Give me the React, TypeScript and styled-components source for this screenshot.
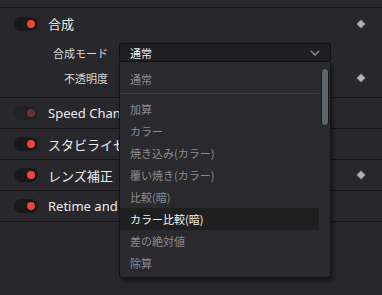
import React from "react";
import styled, { createGlobalStyle } from "styled-components";

const Global = createGlobalStyle`
  html, body { margin: 0; padding: 0; background: #28272c; }
  body { font-family: "Noto Sans", "Noto Sans CJK JP", sans-serif; }
`;

const Page = styled.div`
  width: 382px;
  height: 295px;
  background: #28272c;
  overflow: hidden;
  position: relative;
`;

const TopGap = styled.div`
  height: 7px;
  border-bottom: 1px solid #151517;
`;

const Section = styled.div`
  display: flex;
  flex-direction: column;
  padding-bottom: 7px;
  border-bottom: 1px solid #151517;
`;

const Row = styled.div<{ $h: number }>`
  display: flex;
  align-items: center;
  padding: 0 16px 0 14px;
  gap: 10px;
  box-sizing: border-box;
  border-bottom: ${(p) => (p.$h === 30 ? "1px solid #151517" : "none")};
  height: ${(p) => (p.$h === 30 ? 31 : p.$h)}px;
`;

const Toggle = styled.div<{ $off?: boolean }>`
  width: 24px;
  height: 14px;
  border-radius: 7px;
  background: ${(p) => (p.$off ? "#222125" : "#19191b")};
  display: flex;
  align-items: center;
  justify-content: flex-end;
  padding-right: 3px;
  box-sizing: border-box;
  flex: none;
`;

const Dot = styled.div<{ $off?: boolean }>`
  width: 8px;
  height: 8px;
  border-radius: 50%;
  background: ${(p) => (p.$off ? "#6a3232" : "#e8473a")};
`;

const Title = styled.span`
  font-family: "Noto Sans", "Noto Sans CJK JP", sans-serif;
  font-size: 13px;
  color: #ececec;
  white-space: nowrap;
  flex: 1;
  overflow: hidden;
`;

const ParamRow = styled.div<{ $h: number }>`
  height: ${(p) => p.$h}px;
  display: flex;
  align-items: center;
  padding-right: 16px;
`;

const ParamLabel = styled.span`
  width: 108px;
  text-align: right;
  font-family: "Noto Sans CJK JP", sans-serif;
  font-size: 11px;
  color: #d8d8d8;
  margin-right: 11px;
  flex: none;
  white-space: nowrap;
`;

const Spacer = styled.div`
  flex: 1;
`;

const SelectWrap = styled.div`
  position: relative;
  width: 212px;
  flex: none;
`;

const SelectBox = styled.div`
  height: 19px;
  box-sizing: border-box;
  border: 1px solid #111112;
  border-radius: 3px;
  background: #1f1f21;
  display: flex;
  align-items: center;
  justify-content: space-between;
  padding: 0 10px 0 10px;
  font-family: "Noto Sans CJK JP", sans-serif;
  font-size: 11px;
  color: #f2f2f2;
`;

const Menu = styled.div`
  position: absolute;
  left: 0;
  top: 19px;
  width: 212px;
  height: 216px;
  box-sizing: border-box;
  background: #2a292e;
  border: 1px solid #141416;
  border-top: none;
  border-radius: 0 0 3px 3px;
  box-shadow: 2px 3px 4px rgba(0, 0, 0, 0.45);
  padding: 6px 11px 0 0;
  z-index: 5;
  display: flex;
  flex-direction: column;
`;

const Item = styled.div<{ $active?: boolean }>`
  height: 22px;
  display: flex;
  align-items: center;
  padding-left: 10px;
  font-family: "Noto Sans CJK JP", sans-serif;
  font-size: 11px;
  color: ${(p) => (p.$active ? "#f4f4f4" : "#8c8c8e")};
  background: ${(p) => (p.$active ? "#1f1f20" : "transparent")};
  white-space: nowrap;
  flex: none;
`;

const Separator = styled.div`
  height: 1px;
  background: #404044;
  margin: 3px 0 4px 0;
  flex: none;
`;

const Scrollbar = styled.div`
  position: absolute;
  right: 1px;
  top: 6px;
  width: 8px;
  height: 58px;
  border-radius: 4px;
  background: #5e656d;
  border: 1px solid #1b1b1d;
  box-sizing: border-box;
`;

const Diamond = () => (
  <svg width="10" height="10" viewBox="0 0 10 10" style={{ flex: "none" }}>
    <polygon points="5,0.5 9.5,5 5,9.5 0.5,5" fill="#b4b4b6" stroke="#4a4a4e" strokeWidth="0.8" />
  </svg>
);

const Chevron = () => (
  <svg width="10" height="6" viewBox="0 0 10 6">
    <polyline points="1,1 5,5 9,1" fill="none" stroke="#8e8e90" strokeWidth="1.5" />
  </svg>
);

const items = ["加算", "カラー", "焼き込み(カラー)", "覆い焼き(カラー)", "比較(暗)", "カラー比較(暗)", "差の絶対値", "除算"];

export default function App() {
  return (
    <Page>
      <Global />
      <TopGap />
      <Section>
        <Row $h={31}>
          <Toggle>
            <Dot />
          </Toggle>
          <Title>合成</Title>
          <Diamond />
        </Row>
        <ParamRow $h={27}>
          <ParamLabel>合成モード</ParamLabel>
          <SelectWrap>
            <SelectBox>
              <span>通常</span>
              <Chevron />
            </SelectBox>
            <Menu>
              <Item>通常</Item>
              <Separator />
              {items.map((t) => (
                <Item key={t} $active={t === "カラー比較(暗)"}>
                  {t}
                </Item>
              ))}
              <Scrollbar />
            </Menu>
          </SelectWrap>
          <Spacer />
        </ParamRow>
        <ParamRow $h={24}>
          <ParamLabel>不透明度</ParamLabel>
          <Spacer />
          <Diamond />
        </ParamRow>
      </Section>
      <Row $h={30}>
        <Toggle $off>
          <Dot $off />
        </Toggle>
        <Title>Speed Change</Title>
      </Row>
      <Row $h={30}>
        <Toggle>
          <Dot />
        </Toggle>
        <Title>スタビライゼーション</Title>
      </Row>
      <Row $h={30}>
        <Toggle>
          <Dot />
        </Toggle>
        <Title>レンズ補正</Title>
        <Diamond />
      </Row>
      <Row $h={30}>
        <Toggle>
          <Dot />
        </Toggle>
        <Title>Retime and Scaling</Title>
      </Row>
    </Page>
  );
}
